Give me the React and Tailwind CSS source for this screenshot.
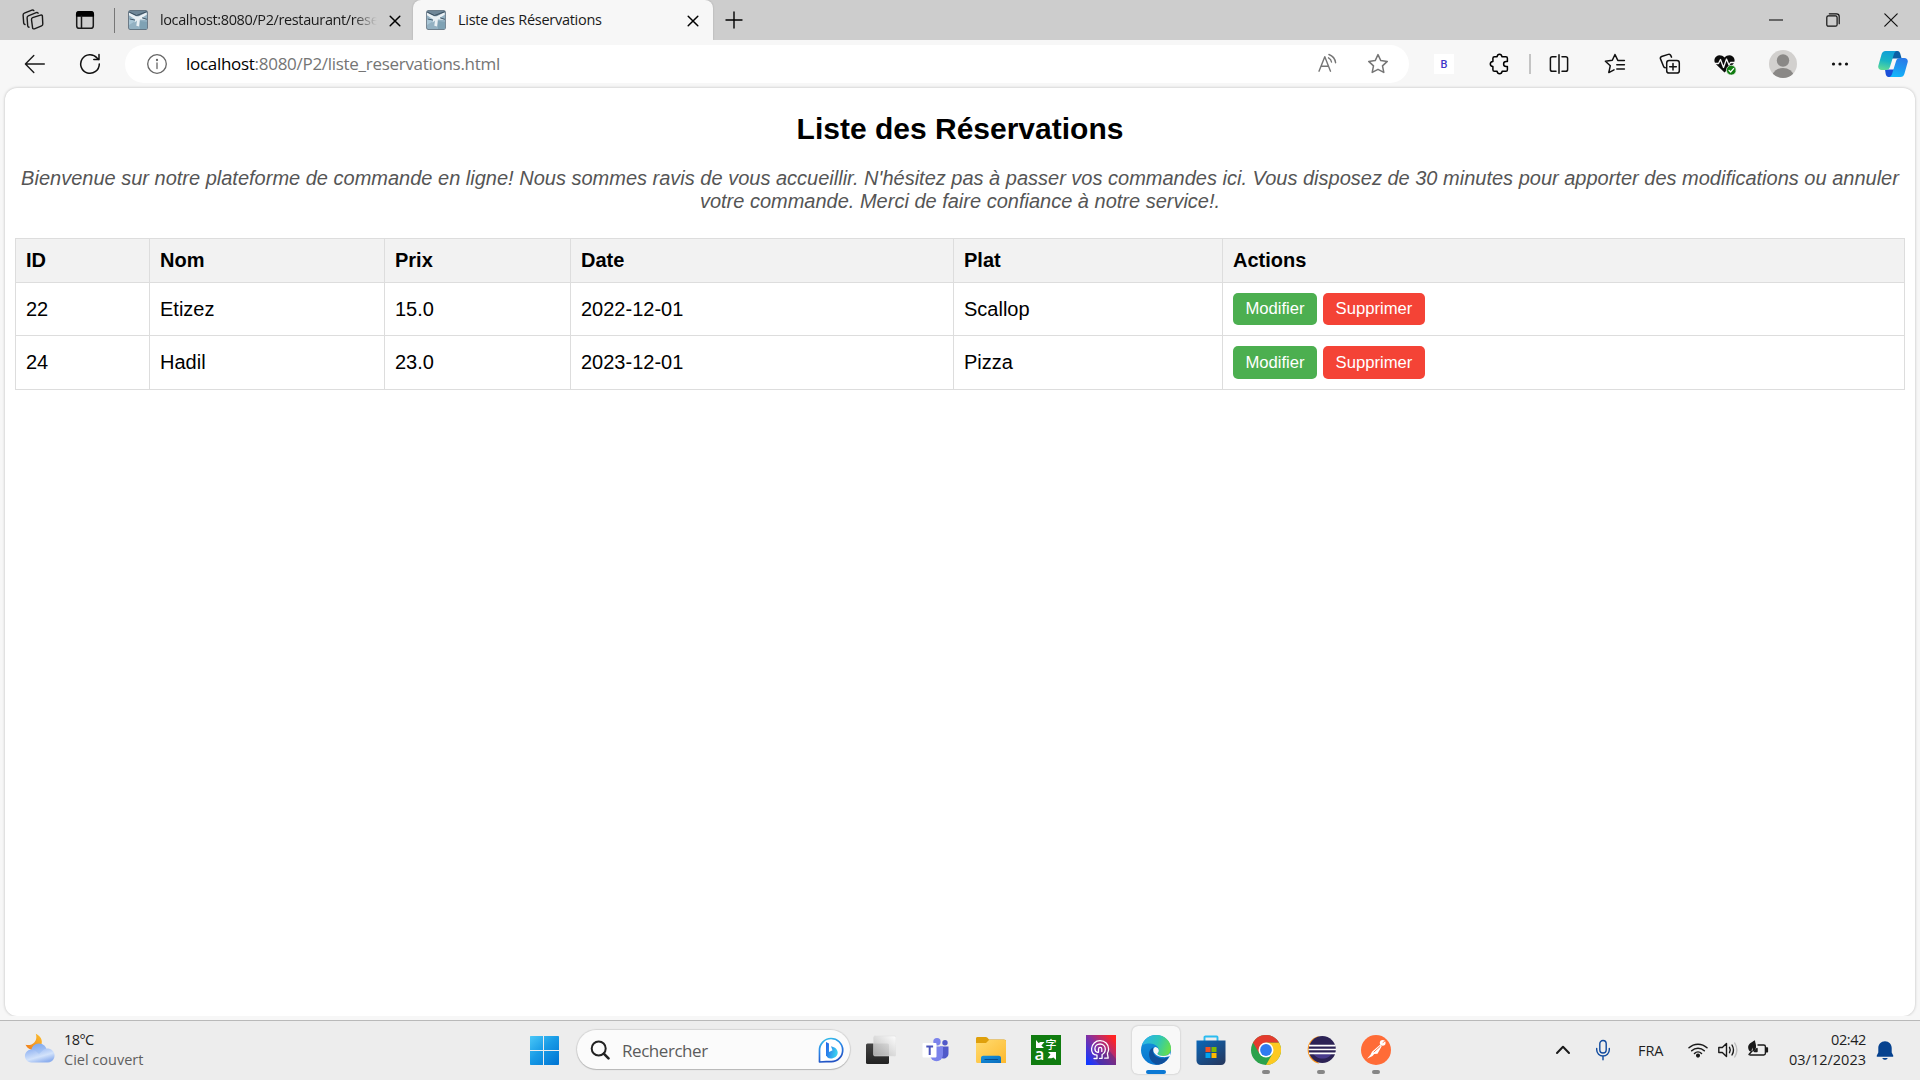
import React from "react";

const UI = "font-['Open_Sans','Noto_Sans',sans-serif]";

function Icon({ w, h, className = "", children, stroke = "#1a1a1a", sw = 1.5 }) {
  return (
    <svg
      width={w}
      height={h}
      viewBox={`0 0 ${w} ${h}`}
      fill="none"
      stroke={stroke}
      strokeWidth={sw}
      strokeLinecap="round"
      strokeLinejoin="round"
      className={`block shrink-0 ${className}`}
    >
      {children}
    </svg>
  );
}

function Favicon({ className }) {
  return (
    <Icon w={20} h={20} className={className} stroke="none">
      <rect x="0.3" y="0.3" width="19.4" height="19.4" rx="1.8" fill="#42586a" />
      <rect x="1" y="1" width="18" height="18" rx="1" fill="#93b1c2" />
      <path d="M1 1h18v2l-9 4-9-4Z" fill="#6f8798" />
      <path d="M1 8l7-1 1 3-8 5Z" fill="#a9c6d6" />
      <path d="M12 11l7 1v7h-7Z" fill="#7fa2b4" />
      <path d="M1 2.600 8 6.300h2.600L18.700 2.300v2.400L14 7.700l4.500 2-6.600-.2-.9 7-2.700-.7.700-5.300-2.500 2 .8-3L1 5.200Z" fill="#e9f0f4" />
      <path d="M1.500 2.200 8.500 5.500 18.500 1.800M14.500 8l4 1.200M6.500 10 2 9" stroke="#34495a" strokeWidth=".9" />
    </Icon>
  );
}

function TabStrip() {
  return (
    <div className="flex h-10 w-full shrink-0 items-center bg-[#cdcdcd]">
      <Icon w={22} h={22} className="ml-[22px]" sw={1.400}>
        <path d="M10.600 8.700 18.600 6.100c1-.3 1.700.1 1.800 1l.4 7.900c0 .9-.3 1.500-1.200 1.800l-7.200 3c-1 .3-1.700-.1-1.800-1l-1.100-8c-.1-1 .2-1.800 1.100-2.100Z" />
        <path d="M7 18.200c-.8-.2-1.200-.6-1.300-1.400L5.100 8.700c0-.9.400-1.600 1.200-1.900l7.900-3.100c.8-.3 1.500-.1 1.900.5" />
        <path d="M3 15.500c-.8-.2-1.200-.6-1.300-1.400L1.100 6.100c0-.9.400-1.600 1.200-1.900l7.600-3.100c.8-.3 1.500-.1 1.900.5" />
      </Icon>
      <Icon w={20} h={20} className="ml-[31px]" sw={1.5}>
        <rect x="1.700" y="1.700" width="16.600" height="16.600" rx="2.600" />
        <path d="M1.700 6V4.300c0-1.400 1.200-2.600 2.600-2.600h11.400c1.400 0 2.600 1.200 2.600 2.600V6Z" fill="#000" stroke="#000" />
        <path d="M6.500 6v12" />
      </Icon>
      <div className="ml-[19px] h-[25px] w-px bg-[#777]" />
      <Favicon className="ml-[13px]" />
      <div
        className={`${UI} ml-[12px] w-[219px] whitespace-nowrap bg-gradient-to-r from-[#1a1a1a] from-88% to-transparent to-99% bg-clip-text text-[14.5px] leading-5 tracking-[-0.38px] text-transparent`}
      >
        localhost:8080/P2/restaurant/rese
      </div>
      <Icon w={12} h={12} className="ml-[10px] mt-px" stroke="#000">
        <path d="M1.200 1.200 10.800 10.800M10.800 1.200 1.200 10.800" />
      </Icon>
      <div className="ml-[12px] flex h-10 w-[300px] items-center rounded-t-lg bg-[#f7f7f7] shadow-[0_0_2px_rgba(0,0,0,0.2)]">
        <Favicon className="ml-[13px]" />
        <div className={`${UI} ml-[12px] w-[217px] whitespace-nowrap text-[14.5px] leading-5 tracking-[-0.27px] text-[#1a1a1a]`}>
          Liste des Réservations
        </div>
        <Icon w={12} h={12} className="ml-[12px] mt-px" stroke="#000">
          <path d="M1.200 1.200 10.800 10.800M10.800 1.200 1.200 10.800" />
        </Icon>
      </div>
      <Icon w={18} h={18} className="ml-[12px]" stroke="#000" sw={1.400}>
        <path d="M9 1v16M1 9h16" />
      </Icon>
      <div className="flex-1" />
      <Icon w={14} h={14} stroke="#000" sw={1.200}>
        <path d="M.5 7h13" />
      </Icon>
      <Icon w={14} h={14} className="ml-[43px] mb-px" stroke="#111" sw={1.200}>
        <rect x=".8" y="2.900" width="10.300" height="10.300" rx="1.500" />
        <path d="M3.300.8h7.200c1.600 0 2.700 1.100 2.700 2.700v7.200" />
      </Icon>
      <Icon w={14} h={14} className="ml-[44px] mr-[22px] mb-px" stroke="#111" sw={1.200}>
        <path d="M.8.8l12.400 12.400M13.200.8.8 13.200" />
      </Icon>
    </div>
  );
}

function Toolbar() {
  return (
    <div className="flex h-12 w-full shrink-0 items-center bg-[#f7f7f7]">
      <Icon w={22} h={20} className="ml-[24px]" stroke="#1a1a1a" sw={1.400}>
        <path d="M20.300 10H1.600M9.800 1.600 1.400 10l8.400 8.400" />
      </Icon>
      <Icon w={22} h={22} className="ml-[33px]" stroke="#111" sw={1.500}>
        <path d="M20.300 11a9.300 9.300 0 1 1-2.200-6L20 6.600M20 1.400v5.200h-5.200" />
      </Icon>
      <div className="ml-[24px] flex h-[38px] w-[1284px] items-center rounded-full bg-white">
        <Icon w={22} h={22} className="ml-[21px]" stroke="#666" sw={1.300}>
          <circle cx="11" cy="11" r="9.300" />
          <path d="M11 10v5.500" />
          <circle cx="11" cy="7" r=".5" fill="#666" />
        </Icon>
        <div className={`${UI} ml-[18px] flex-1 whitespace-nowrap text-[17px] leading-6 tracking-[-0.29px] text-[#757575]`}>
          <span className="text-black">localhost</span>:8080/P2/liste_reservations.html
        </div>
        <Icon w={22} h={20} className="mr-[28px] mb-[2px]" stroke="#757575" sw={1.400}>
          <path d="m2 18.200 5.800-14.500 5.700 14.500M4 13.300h7.600" />
          <path d="M11.500 4.800c1.700.8 2.800 2.300 3 4.200M11.900 1.500c3.600 1.300 6.200 4.400 6.700 8.200" />
        </Icon>
        <Icon w={22} h={22} className="mr-[20px]" stroke="#757575" sw={1.500}>
          <path d="m11 1.600 2.800 6 6.500.8-4.800 4.500 1.300 6.500L11 16.300l-5.800 3.100 1.300-6.500L1.700 8.400l6.500-.8Z" />
        </Icon>
      </div>
      <div className="ml-[25px] flex size-5 shrink-0 items-center justify-center bg-white font-['Roboto',sans-serif] text-[11px] font-medium leading-none text-[#3f37c9]">
        B
      </div>
      <Icon w={20} h={22} className="ml-[35px]" stroke="#000" sw={1.500}>
        <path d="M5.500 3.700h2.600C8.300 2.200 9 1.300 10.500 1.300s2.200.9 2.400 2.400h4c1 0 1.500.6 1.500 1.500v3.200h-1.300c-1.500 0-2.500 1-2.500 2.500s1 2.500 2.500 2.500h1.300v3.300c0 1-.6 1.600-1.500 1.600h-3.800c-.2 1.500-1 2.400-2.500 2.400s-2.300-.9-2.500-2.400H5.500c-1 0-1.600-.6-1.600-1.600v-3.200C2.300 13.300 1.300 12.500 1.300 11s1-2.300 2.600-2.500V5.200c0-.9.600-1.500 1.600-1.500Z" />
      </Icon>
      <div className="ml-[20px] h-5 w-[2px] bg-[#c4c4c4]" />
      <Icon w={20} h={20} className="ml-[18px]" stroke="#111" sw={1.500}>
        <path d="M7 2.700H3.300c-1.100 0-1.900.8-1.900 1.900v10.800c0 1.100.8 1.900 1.900 1.900H7M13 2.700h3.700c1.100 0 1.900.8 1.900 1.900v10.800c0 1.100-.8 1.900-1.900 1.900H13M10 .8v18.400" />
      </Icon>
      <Icon w={22} h={22} className="ml-[35px]" stroke="#111" sw={1.500}>
        <path d="M20.400 7.600h-6.600L11 1.700l-2.700 5.800-6.900.9 4.900 4.500-1.500 6.900 5.200-2.800M12.800 12h7.600M12.800 16.300h7.600" transform="translate(0 -.2)" />
      </Icon>
      <Icon w={22} h={22} className="ml-[33px]" stroke="#111" sw={1.500}>
        <rect x="7.700" y="7.500" width="12.600" height="12.600" rx="2.400" />
        <path d="M14 10.500v6.600M10.700 13.800h6.600M6.300 14.700c-.9-.1-1.500-.6-1.800-1.500L1.500 5.900c-.4-1 .1-2 1.100-2.400l6.700-2.100c1-.3 2 .1 2.400 1l.8 1.700" />
      </Icon>
      <Icon w={24} h={24} className="ml-[33px] mt-[2px]" stroke="none">
        <path d="M10.500 19.500 2 11.200C-.4 8.700.1 5.200 2.300 3.400c2.300-1.900 5.800-1.500 8.200 1 2.400-2.500 5.900-2.900 8.200-1 2.200 1.800 2.700 5.300.3 7.800Z" fill="#0b0b0b" />
        <path d="M-.5 10.500h5l2-4 3 8 3-8.500 2.500 6 1.500-2.500h4.500" stroke="#f7f7f7" strokeWidth="1.300" />
        <circle cx="17.300" cy="17.200" r="4.900" fill="#107c10" stroke="#f7f7f7" strokeWidth=".7" />
        <path d="m15 17.400 1.600 1.600 3-3.400" stroke="#fff" strokeWidth="1.300" />
      </Icon>
      <Icon w={28} h={28} className="ml-[31px]" stroke="none">
        <clipPath id="avatarClip"><circle cx="14" cy="14" r="14" /></clipPath>
        <circle cx="14" cy="14" r="14" fill="#d2d0ce" />
        <circle cx="14" cy="10.500" r="6.200" fill="#8a8886" />
        <ellipse cx="14" cy="25.500" rx="10.300" ry="7.500" fill="#8a8886" clipPath="url(#avatarClip)" />
      </Icon>
      <Icon w={18} h={6} className="ml-[34px]" stroke="none">
        <circle cx="2.500" cy="3" r="1.600" fill="#111" />
        <circle cx="9" cy="3" r="1.600" fill="#111" />
        <circle cx="15.500" cy="3" r="1.600" fill="#111" />
      </Icon>
      <Icon w={30} h={28} className="ml-[29px]" stroke="none">
        <defs>
          <linearGradient id="cpA" x1=".4" y1="0" x2=".2" y2="1">
            <stop offset="0" stopColor="#0f9fd6" />
            <stop offset=".5" stopColor="#19b5c4" />
            <stop offset="1" stopColor="#62dd95" />
          </linearGradient>
          <linearGradient id="cpB" x1=".6" y1="0" x2=".3" y2="1">
            <stop offset="0" stopColor="#2a7be8" />
            <stop offset=".5" stopColor="#1e97f0" />
            <stop offset="1" stopColor="#12b8fb" />
          </linearGradient>
        </defs>
        <path d="M14 1h5.500c1.600 0 2.300 1.200 2.800 2.700L23.600 8.500H14Z" fill="#0b5fa5" />
        <path d="M7 19.500h9.500L15 27h-4.500c-1.600 0-2.400-1.400-2.800-3Z" fill="#1a4fd8" />
        <path d="M7.600 1h11c-1.500.6-2.200 1.800-2.800 3.600L12 16.700c-.7 2.200-1.900 3.300-4 3.300H3.700C.9 20-.3 18 .4 15.400L3.500 4.600C4.100 2.300 5.400 1 7.600 1Z" fill="url(#cpA)" />
        <path d="M22.400 27h-11c1.500-.6 2.200-1.800 2.800-3.600L18 11.300C18.700 9.100 19.900 8 22 8h4.300c2.800 0 4 2 3.300 4.600l-3.100 10.800c-.6 2.300-1.900 3.600-4.100 3.600Z" fill="url(#cpB)" />
      </Icon>
    </div>
  );
}

const reservations = [
  { id: 22, nom: "Etizez", prix: "15.0", date: "2022-12-01", plat: "Scallop" },
  { id: 24, nom: "Hadil", prix: "23.0", date: "2023-12-01", plat: "Pizza" },
];

function Page() {
  const cell = "border border-[#ddd] px-[10px] py-0 text-left align-middle";
  const button = "flex cursor-pointer items-center justify-center rounded-[5px] text-[16.67px] leading-none text-white";
  return (
    <div className="h-[928px] w-full shrink-0 bg-[#f7f7f7] pl-[5px] pr-[5px]">
      <main className="h-[928px] rounded-xl bg-white px-[10px] pt-[24px] font-['Liberation_Sans',Arial,sans-serif] text-xl leading-[23px] text-black shadow-[0_0_3px_rgba(0,0,0,0.25)]">
        <h2 className="text-center text-[30px] font-bold leading-[34px]">Liste des Réservations</h2>
        <p className="mt-[21px] text-center italic text-[#555]">
          Bienvenue sur notre plateforme de commande en ligne! Nous sommes ravis de vous accueillir. N&apos;hésitez pas à passer vos commandes ici. Vous disposez de 30 minutes pour apporter des modifications ou annuler votre commande. Merci de faire confiance à notre service!.
        </p>
        <table className="mt-[25px] w-full table-fixed border-collapse">
          <colgroup>
            <col className="w-[134px]" />
            <col className="w-[235px]" />
            <col className="w-[186px]" />
            <col className="w-[383px]" />
            <col className="w-[269px]" />
            <col />
          </colgroup>
          <thead>
            <tr className="h-[44px] bg-[#f2f2f2]">
              {["ID", "Nom", "Prix", "Date", "Plat", "Actions"].map((h) => (
                <th key={h} className={`${cell} font-bold`}>{h}</th>
              ))}
            </tr>
          </thead>
          <tbody>
            {reservations.map((r, i) => (
              <tr key={r.id} className={i === 0 ? "h-[53px]" : "h-[54px]"}>
                <td className={cell}>{r.id}</td>
                <td className={cell}>{r.nom}</td>
                <td className={cell}>{r.prix}</td>
                <td className={cell}>{r.date}</td>
                <td className={cell}>{r.plat}</td>
                <td className={cell}>
                  <div className="flex gap-[6px]">
                    <button className={`${button} ${i === 0 ? "h-8" : "h-[33px] pt-px"} w-[84px] bg-[#4caf50]`}>Modifier</button>
                    <button className={`${button} ${i === 0 ? "h-8" : "h-[33px] pt-px"} w-[102px] bg-[#f44336]`}>Supprimer</button>
                  </div>
                </td>
              </tr>
            ))}
          </tbody>
        </table>
      </main>
    </div>
  );
}

function Tile({ children, running }) {
  return (
    <div className="flex h-[59px] w-[55px] shrink-0 flex-col items-center pt-[14px]">
      {children}
      {running && <div className="mt-[5px] h-1 w-2 rounded-full bg-[#868686]" />}
    </div>
  );
}

function PinnedApps() {
  return (
    <>
      <Tile>
        <Icon w={30} h={30} stroke="none">
          <defs>
            <linearGradient id="tvA" x1="0" y1="0" x2="0" y2="1"><stop offset="0" stopColor="#444" /><stop offset="1" stopColor="#222" /></linearGradient>
            <linearGradient id="tvB" x1="1" y1="0" x2="0" y2="1"><stop offset="0" stopColor="#fff" /><stop offset="1" stopColor="#b5b5b5" /></linearGradient>
          </defs>
          <rect x="0" y="8.500" width="23" height="20.500" rx="1.500" fill="url(#tvA)" />
          <rect x="7.500" y="1" width="22.500" height="20" rx="1.500" fill="url(#tvB)" fillOpacity=".9" stroke="#ddd" strokeWidth=".5" />
        </Icon>
      </Tile>
      <Tile>
        <Icon w={30} h={30} stroke="none">
          <circle cx="16" cy="6.700" r="3.700" fill="#7b83eb" />
          <circle cx="24" cy="7.700" r="2.700" fill="#5059c9" />
          <path d="M19 11.500h8.500v7a5 5 0 0 1-8.500 3.600Z" fill="#5059c9" />
          <path d="M9 11.500h13v8.200a6.500 6.500 0 0 1-13 0Z" fill="#7b83eb" />
          <rect x="1.500" y="8" width="14" height="14.500" rx="1" fill="#fff" />
          <path d="M5.300 11.500h6.800M8.700 11.500v8.500" stroke="#4b53bc" strokeWidth="2" strokeLinecap="butt" />
        </Icon>
      </Tile>
      <Tile>
        <Icon w={30} h={30} stroke="none">
          <defs>
            <linearGradient id="fo" x1="0" y1="0" x2="1" y2="1"><stop offset="0" stopColor="#ffdb70" /><stop offset="1" stopColor="#fdb92e" /></linearGradient>
            <linearGradient id="fb" x1="0" y1="0" x2="1" y2="1"><stop offset="0" stopColor="#1792dd" /><stop offset="1" stopColor="#0a6cbc" /></linearGradient>
          </defs>
          <path d="M0 3.500C0 2.600.6 2 1.500 2h8.300c.6 0 1 .2 1.400.6L13 4.500h15c1.200 0 2 .7 2 1.800V9H0Z" fill="#dfa00c" />
          <path d="M0 8h10l3-3h15.500c.9 0 1.500.6 1.500 1.500V28H1.500C.6 28 0 27.400 0 26.500Z" fill="url(#fo)" />
          <path d="M5 28v-5c0-1.400 1-2.300 2.300-2.300h15.400c1.300 0 2.300.9 2.300 2.300v5Z" fill="url(#fb)" />
          <path d="M9 24.500h12.500" stroke="#084c8c" strokeWidth="1.200" />
        </Icon>
      </Tile>
      <Tile>
        <div className="relative size-[30px] bg-[#107c10] text-white">
          <span className="absolute left-[4px] top-[9px] font-['Open_Sans',sans-serif] text-[17px] font-semibold leading-5">a</span>
          <span className="absolute left-[15px] top-[3px] font-['Noto_Sans_CJK_SC',sans-serif] text-[11px] font-medium leading-[12px]">字</span>
          <Icon w={30} h={30} className="absolute left-0 top-0" stroke="none">
            <path d="M5 5v8h8l-2.600-2.600L13.500 7h-4L7.500 8ZM25 25v-8h-8l2.500 2.500-3 3.700h4l2-.700Z" fill="#fff" />
          </Icon>
        </div>
      </Tile>
      <Tile>
        <Icon w={30} h={30} stroke="#fff" sw={1.300}>
          <defs>
            <linearGradient id="fc" x1="0" y1=".85" x2=".9" y2=".1"><stop offset="0" stopColor="#1238ff" /><stop offset=".5" stopColor="#8530a0" /><stop offset="1" stopColor="#ff2424" /></linearGradient>
          </defs>
          <rect width="30" height="30" fill="url(#fc)" stroke="none" />
          <path d="m7 23 7 7h16v-6L22 14Z" fill="#422a80" fillOpacity=".4" stroke="none" />
          <path d="M8 23.500h3v-3.300C7 19.700 5.300 17 5.600 13.500 6 9 9.500 5.700 14 5.700c5 0 8.600 3.600 8.600 8.300 0 2-.6 3.300-1.200 4.600l.8 4.600h-3.500" />
          <path d="M13.500 23.300h2.600v-3.800c2-1 3.200-2.900 3.200-5.300 0-3-2.200-5.200-5.200-5.200s-5.200 2-5.200 4.700c0 2 1 3.300 2.900 3.600" />
          <path d="M12.500 17.300v-3.200c0-1 .6-1.700 1.600-1.700s1.700.7 1.700 1.700v2.300" />
        </Icon>
      </Tile>
      <div className="flex h-[59px] w-[55px] shrink-0 items-start justify-center pt-[5px]">
        <div className="flex h-12 w-12 flex-col items-center rounded-md bg-[#f8f8f8] pt-[9px] shadow-[0_0_2px_rgba(0,0,0,0.25)]">
          <Icon w={30} h={30} stroke="none">
            <defs>
              <linearGradient id="eg1" x1="0" y1=".3" x2="1" y2=".6"><stop offset="0" stopColor="#2cb3ea" /><stop offset=".5" stopColor="#2dc6b8" /><stop offset="1" stopColor="#68e04a" /></linearGradient>
              <linearGradient id="eg2" x1=".3" y1="0" x2=".4" y2="1"><stop offset="0" stopColor="#1595dc" /><stop offset="1" stopColor="#0873cf" /></linearGradient>
            </defs>
            <circle cx="15" cy="15" r="15" fill="url(#eg2)" />
            <path d="M1 10C3.300 3.700 8.800 0 15 0c8.700 0 15 6 15 13.500 0 4.500-3.300 7.500-7.800 7.500-3.700 0-5.800-1.200-5.800-2.300 0-.8 1.400-1.300 1.400-3.500 0-3.700-4.200-6.700-8.800-6.700-3.700 0-6.200.7-8 1.500Z" fill="url(#eg1)" />
            <path d="M12.300 12.200c-2.800 1.300-4.300 4-4.300 7 0 5.700 4.600 10.300 9.500 10.500 4.200-.7 7.700-3.200 9.700-6.500.4-.7-.2-1.200-.9-.8-1.500.8-3.300 1.100-4.800 1.100-5.500 0-9.500-3.500-9.500-7.700 0-1.300.1-2.300.3-3.600Z" fill="#10509c" />
            <path d="M29 21 c-2 .8-4.700 1.300-7 1.100-5.200-.4-9.700-3.400-9.700-7.200 0-1.300.7-2.500 2-3 2.300.4 3.500 2 3.500 3.600 0 1.800-1.300 2.400-1.300 3.200 0 1.100 2.400 2.300 5.700 2.300 3.200 0 5.600-1.200 7-3.300Z" fill="#f8f8f8" />
          </Icon>
          <div className="mt-[5px] h-1 w-5 shrink-0 rounded-full bg-[#0b78d4]" />
        </div>
      </div>
      <Tile>
        <Icon w={30} h={30} stroke="none">
          <defs>
            <linearGradient id="st" x1="0" y1="0" x2=".8" y2="1"><stop offset="0" stopColor="#0b67b8" /><stop offset="1" stopColor="#243a63" /></linearGradient>
          </defs>
          <path d="M8.500 6.500V2.300c0-.6.300-.8.800-.8h11.400c.5 0 .8.200.8.800v4.200" stroke="#2bbcf0" strokeWidth="1.900" />
          <path d="M.5 5.500h29v20c0 2.700-1.800 4.500-4.500 4.500H5C2.300 30 .5 28.200.5 25.500Z" fill="url(#st)" />
          <path d="M9.500 12h5v5h-5Z" fill="#f25022" /><path d="M15.500 12h5v5h-5Z" fill="#7fba00" />
          <path d="M9.500 18h5v5h-5Z" fill="#00a4ef" /><path d="M15.500 18h5v5h-5Z" fill="#ffb900" />
        </Icon>
      </Tile>
      <Tile running>
        <Icon w={30} h={30} stroke="none">
          <circle cx="15" cy="15" r="15" fill="#2ba24c" />
          <path d="M15 7.500h13A15 15 0 0 1 15 30l6.500-11.300Z" fill="#fdc921" />
          <path d="M15 7.500h13A15 15 0 0 0 2 7.500l6.500 11.200Z" fill="#e33b2e" />
          <circle cx="15" cy="15" r="7.500" fill="#fff" />
          <circle cx="15" cy="15" r="5.900" fill="#2f7bf0" />
        </Icon>
      </Tile>
      <Tile running>
        <Icon w={30} h={30} stroke="none">
          <path d="M13 1A14 14 0 0 0 13 28.500L10 24V6Z" fill="#f7941e" />
          <circle cx="16.300" cy="14.500" r="13.500" fill="#2c2255" />
          <path d="M7 18h19c-1.500 3.500-5 5.500-9.500 5.500S8.500 21.500 7 18Z" fill="#483a8c" />
          <path d="M3 10.600h26.300M2.500 14.500H30M3 18.300h27" stroke="#fff" strokeWidth="1.700" strokeLinecap="butt" />
        </Icon>
      </Tile>
      <Tile running>
        <Icon w={30} h={30} stroke="none">
          <circle cx="15" cy="15" r="15" fill="#ff6c37" />
          <circle cx="21.700" cy="7.800" r="2.900" fill="#fff" />
          <path d="M19.300 9.500 11 16.800l-1.500 3-3.500 3.900 5.500-2.800 1.700-1.900 3.300-.3 4.200-7.400Z" fill="#fff" />
          <path d="m13 17 6-5.500M22 7.500l1.500-1" stroke="#ff6c37" strokeWidth=".9" />
        </Icon>
      </Tile>
    </>
  );
}

function Taskbar() {
  return (
    <div className={`${UI} flex h-[60px] w-full shrink-0 items-start border-t border-[#b9b9b9] bg-[#ededed]`}>
      <Icon w={32} h={32} className="ml-[24px] mt-[12px]" stroke="none">
        <defs>
          <linearGradient id="mo" x1="0" y1="1" x2="1" y2="0"><stop offset="0" stopColor="#f07a1a" /><stop offset="1" stopColor="#fbc02d" /></linearGradient>
          <linearGradient id="cl" x1="0" y1="0" x2=".6" y2="1"><stop offset="0" stopColor="#86abf0" /><stop offset=".65" stopColor="#d3e3fb" /><stop offset="1" stopColor="#8fb0ee" /></linearGradient>
          <linearGradient id="cl2" x1=".3" y1="0" x2=".5" y2="1"><stop offset="0" stopColor="#7fa8ee" /><stop offset="1" stopColor="#c5daf9" /></linearGradient>
        </defs>
        <path d="M11.800.8c6.300 2.700 7.800 9.200 4 13.500-3.700 4.200-11 4-14.300-2.500 3.300.7 6.700.3 9-2.600 2.200-2.600 2.300-5.600 1.300-8.400Z" fill="url(#mo)" />
        <circle cx="15" cy="18.500" r="8" fill="url(#cl2)" />
        <path d="M7.500 29.500a6.500 6.500 0 1 1 4.200-11.400l3.300 3 3.200-3.100A7 7 0 1 1 24 29.500Z" fill="url(#cl)" />
      </Icon>
      <div className="ml-[8px] mt-[9px] w-[464px] text-[14.5px] leading-5">
        <div className="tracking-[-0.6px] text-[#1f1f1f]">18°C</div>
        <div className="text-[#5f5f5f]">Ciel couvert</div>
      </div>
      <Icon w={31} h={30} className="mt-[14px]" stroke="none">
        <defs>
          <linearGradient id="wi" gradientUnits="userSpaceOnUse" x1="1" y1="1" x2="27" y2="30"><stop offset="0" stopColor="#4cc9f8" /><stop offset=".5" stopColor="#189be6" /><stop offset="1" stopColor="#0277d4" /></linearGradient>
        </defs>
        <path d="M2.500 1H15v14H2V1.500ZM16 1h14c.6 0 1 .4 1 1v13H16ZM2 16h13v14H3c-.6 0-1-.4-1-1ZM16 16h15v13c0 .6-.4 1-1 1H16Z" fill="url(#wi)" />
      </Icon>
      <div className="ml-[18px] mt-[9px] flex h-[39px] w-[273px] items-center rounded-full bg-[#fbfbfb] shadow-[0_0_1px_1px_rgba(0,0,0,0.1),0_1px_1px_rgba(0,0,0,0.15)]">
        <Icon w={20} h={20} className="ml-[13px]" stroke="#222" sw={2}>
          <circle cx="8.700" cy="8.500" r="7" />
          <path d="m13.800 13.600 4.700 4.700" strokeWidth="2.600" />
        </Icon>
        <div className="ml-[12px] flex-1 pt-[2px] text-[17px] leading-6 tracking-[-0.45px] text-[#5b5b5b]">Rechercher</div>
        <Icon w={26} h={26} className="mr-[6px]" stroke="none">
          <defs>
            <linearGradient id="bi" x1="0" y1="0" x2=".3" y2="1"><stop offset="0" stopColor="#33c4e8" /><stop offset=".5" stopColor="#2b86e8" /><stop offset="1" stopColor="#2253c4" /></linearGradient>
            <linearGradient id="bj" x1="0" y1="0" x2="1" y2=".3"><stop offset="0" stopColor="#2461e8" /><stop offset="1" stopColor="#39cdf0" /></linearGradient>
          </defs>
          <path d="M1.500 25V13.300A11.600 11.600 0 1 1 13.300 24.700C8.500 24.700 7.500 24.300 1.500 25Z" fill="#fff" stroke="url(#bi)" strokeWidth="1.700" />
          <path d="M8 5 11 6.500v10.800L8 19ZM8 16.500l6.500-3.300-1.500-4c4.200.8 6.700 3.400 6.700 6.300 0 3.700-3.400 6-6.900 6C10 21.500 8 19.700 8 17Z" fill="url(#bj)" />
        </Icon>
      </div>
      <div className="ml-[3px] flex">
        <PinnedApps />
      </div>
      <div className="flex-1" />
      <Icon w={16} h={10} className="mt-[24px]" stroke="#1a1a1a" sw={2}>
        <path d="m2 8 6-6.200L14 8" />
      </Icon>
      <Icon w={16} h={22} className="ml-[24px] mt-[18px]" stroke="#0f4a9f" sw={1.400}>
        <rect x="4.800" y="1.500" width="6.400" height="12.500" rx="3.200" />
        <path d="M1.700 9.500v1.200a6.300 6.300 0 0 0 12.600 0V9.500M8 17.200v3.500" />
      </Icon>
      <div className="ml-[27px] mt-[20px] w-[50px] text-[14.5px] leading-5 tracking-[-0.1px] text-[#1f1f1f]">FRA</div>
      <Icon w={20} h={16} className="mt-[21px]" stroke="#1a1a1a" sw={1.500}>
        <path d="M1 5.800a13 13 0 0 1 18 0M3.700 8.800a9 9 0 0 1 12.600 0M6.500 11.500a5 5 0 0 1 7 0" />
        <circle cx="10" cy="13.600" r="1.300" fill="#1a1a1a" />
      </Icon>
      <Icon w={21} h={18} className="ml-[10px] mt-[20px]" stroke="#1a1a1a" sw={1.400}>
        <path d="M.8 6.500h3.500l4.200-4v13l-4.200-4H.8Z" />
        <path d="M11.500 6.300c1 1.700 1 3.700 0 5.400M14 4c1.900 3.200 1.900 6.800 0 10" />
        <path d="M16.700 2c2.800 4.500 2.800 9.500 0 14" stroke="#bdbdbd" />
      </Icon>
      <Icon w={22} h={20} className="ml-[8px] mt-[18px]" stroke="#1a1a1a" sw={1.400}>
        <path d="M11 6h5.700c1 0 1.700.7 1.700 1.700v6.600c0 1-.7 1.700-1.700 1.700H3" />
        <rect x="19" y="9" width="1.400" height="3.800" fill="#1a1a1a" />
        <path d="M8 1.300C4 3.500.8 5.500 1.200 9c.2 2 1.200 3.200 2.800 3.600l1.800-4-.3 4.200C8.300 12 9.300 9.500 9 6.500 8.800 4.500 8 3 8 1.300Z" fill="#1a1a1a" stroke="none" />
        <path d="M2 15.500 5 12M7.500 12.500l2.500-3v3Z" />
      </Icon>
      <div className="ml-[8px] mt-[9px] w-[89px] whitespace-nowrap text-right text-[14.500px] leading-5 text-[#1f1f1f]">
        <div className="tracking-[-0.4px]">02:42</div>
        <div>03/12/2023</div>
      </div>
      <Icon w={18} h={20} className="ml-[10px] mr-[26px] mt-[20px]" stroke="none">
        <path d="M9 .3c4 0 6.700 3 6.700 6.800v4.400l1.500 3c.3.700 0 1.300-.8 1.300H1.600c-.8 0-1.100-.6-.8-1.300l1.500-3V7.100C2.300 3.300 5 .3 9 .3Z" fill="#06428f" />
        <path d="M6.300 17h5.400c-.4 1.200-1.300 1.800-2.700 1.800S6.700 18.200 6.300 17Z" fill="#06428f" />
      </Icon>
    </div>
  );
}

export default function App() {
  return (
    <div className="flex h-[1080px] w-[1920px] flex-col overflow-hidden bg-[#f7f7f7]">
      <TabStrip />
      <Toolbar />
      <Page />
      <div className="h-1 shrink-0 bg-[#f7f7f7]" />
      <Taskbar />
    </div>
  );
}
